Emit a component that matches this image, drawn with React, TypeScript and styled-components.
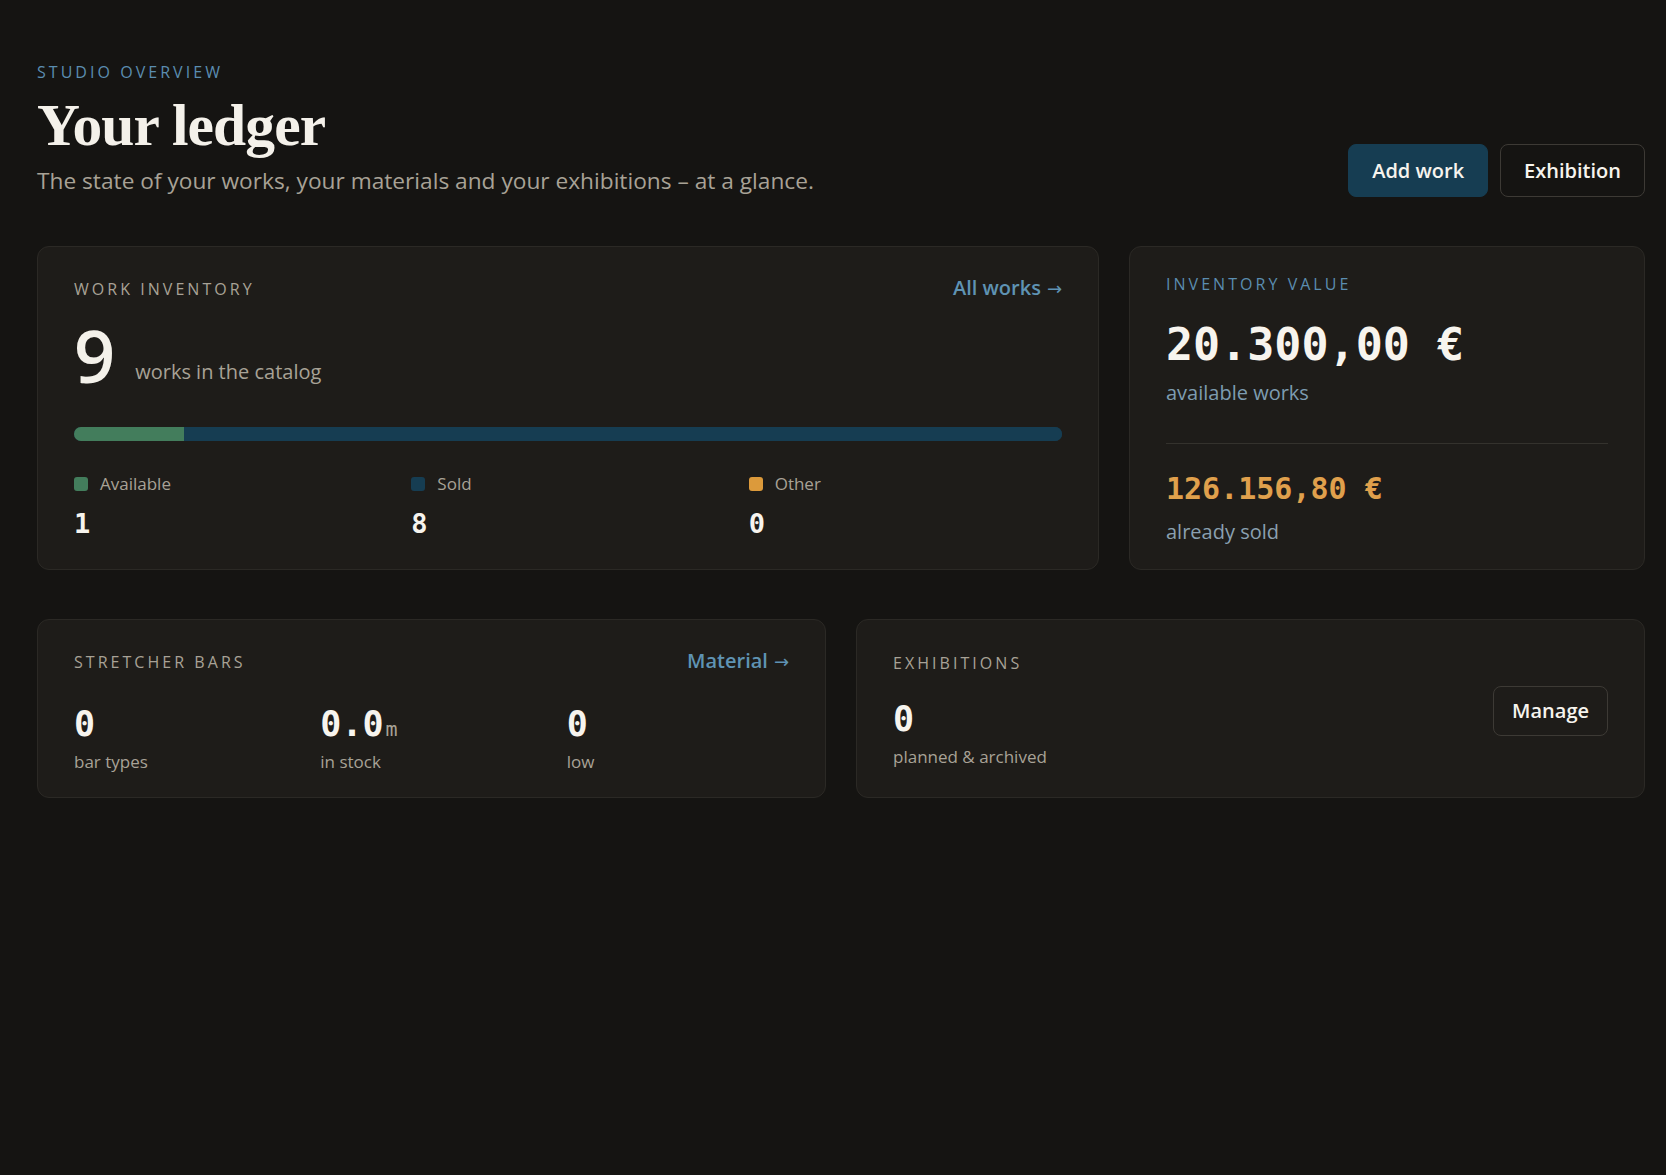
import React from "react";
import styled, { createGlobalStyle } from "styled-components";

const GlobalStyle = createGlobalStyle`
  html, body {
    margin: 0;
    padding: 0;
    background: #151412;
  }
  body {
    font-family: "Open Sans", "Noto Sans", sans-serif;
    color: #f4f1ea;
    -webkit-font-smoothing: antialiased;
  }
  * { box-sizing: border-box; }
`;

const Page = styled.main`
  min-height: 1175px;
  padding: 61px 21px 40px 37px;
  background: #151412;
`;

const Header = styled.header`
  display: flex;
  justify-content: space-between;
  align-items: flex-end;
`;

const HeaderText = styled.div`
  display: flex;
  flex-direction: column;
`;

const Eyebrow = styled.div<{ $tone?: "blue" | "muted" }>`
  font-size: 16px;
  line-height: 22px;
  letter-spacing: 0.19em;
  text-transform: uppercase;
  color: ${(p) => (p.$tone === "blue" ? "#5b8db0" : "#a8a296")};
`;

const Title = styled.h1`
  margin: 10px 0 0;
  font-family: "Liberation Serif", "Times New Roman", serif;
  font-weight: 700;
  font-size: 59.5px;
  line-height: 1.08;
  letter-spacing: -0.015em;
  color: #f4f1ea;
`;

const Subtitle = styled.p`
  margin: 8px 0 0;
  font-size: 22.7px;
  line-height: 32px;
  color: #a8a296;
`;

const Actions = styled.div`
  display: flex;
  gap: 12px;
`;

const Button = styled.button<{ $primary?: boolean; $h?: number; $px?: number }>`
  height: ${(p) => p.$h ?? 53}px;
  padding: 0 ${(p) => p.$px ?? 23}px;
  border-radius: 8px;
  font-family: "Open Sans", sans-serif;
  font-size: 20px;
  font-weight: 600;
  color: #f7f4ee;
  cursor: pointer;
  background: ${(p) => (p.$primary ? "#163d52" : "transparent")};
  border: 1px solid ${(p) => (p.$primary ? "#163d52" : "#3d3a35")};
`;

const Grid = styled.section<{ $cols: string; $mt: number }>`
  display: grid;
  grid-template-columns: ${(p) => p.$cols};
  gap: 30px;
  margin-top: ${(p) => p.$mt}px;
`;

const Card = styled.div`
  background: #1e1c19;
  border: 1px solid #2b2925;
  border-radius: 12px;
  padding: 26px 36px 22px;
  display: flex;
  flex-direction: column;
`;

const RowCard = styled(Card)`
  flex-direction: row;
  align-items: center;
  justify-content: space-between;
`;

const CardHead = styled.div`
  display: flex;
  justify-content: space-between;
  align-items: center;
`;

const HeadLink = styled.a`
  font-size: 20px;
  line-height: 30px;
  font-weight: 600;
  color: #5f93b3;
  text-decoration: none;
  cursor: pointer;
`;

const Arrow = styled.span`
  font-family: "DejaVu Sans", sans-serif;
  font-weight: 400;
  font-size: 18px;
  margin-left: 6px;
`;

const Hero = styled.div`
  display: flex;
  align-items: flex-end;
  gap: 20px;
  margin-top: 15px;
`;

const BigNum = styled.span`
  font-size: 72px;
  line-height: 72px;
  font-weight: 600;
  color: #f4f1ea;
`;

const HeroCaption = styled.div`
  font-size: 20px;
  line-height: 30px;
  color: #a8a296;
  padding-bottom: 4px;
`;

const Caption = styled.div<{ $size?: number; $color?: string; $mt?: number }>`
  font-size: ${(p) => p.$size ?? 20}px;
  line-height: 1.5;
  color: ${(p) => p.$color ?? "#a8a296"};
  margin-top: ${(p) => p.$mt ?? 0}px;
`;

const Bar = styled.div`
  display: flex;
  height: 14px;
  border-radius: 7px;
  overflow: hidden;
  margin-top: 36px;
  background: #163d52;
`;

const BarSeg = styled.div<{ $color: string }>`
  height: 100%;
  background: ${(p) => p.$color};
`;

const Columns = styled.div<{ $mt: number }>`
  display: grid;
  grid-template-columns: repeat(3, minmax(0, 1fr));
  gap: 24px;
  margin-top: ${(p) => p.$mt}px;
`;

const LegendItem = styled.div`
  display: flex;
  flex-direction: column;
`;

const LegendLabel = styled.div`
  display: flex;
  align-items: center;
  gap: 12px;
  font-size: 17px;
  line-height: 25.5px;
  color: #a8a296;
`;

const Swatch = styled.span<{ $color: string }>`
  width: 14px;
  height: 14px;
  border-radius: 3px;
  background: ${(p) => p.$color};
  flex: none;
`;

const Mono = styled.div<{ $size: number; $color?: string; $mt?: number }>`
  font-family: "DejaVu Sans Mono", "Liberation Mono", monospace;
  font-weight: 700;
  font-size: ${(p) => p.$size}px;
  line-height: 1.2;
  color: ${(p) => p.$color ?? "#f7f4ee"};
  margin-top: ${(p) => p.$mt ?? 0}px;
  white-space: nowrap;
`;

const Unit = styled.span`
  font-family: "DejaVu Sans Mono", monospace;
  font-weight: 400;
  font-size: 20px;
  color: #a8a296;
  margin-left: 2px;
`;

const Divider = styled.hr`
  border: none;
  height: 1px;
  background: #34322d;
  margin: 35px 0 0;
`;

const Stat = styled.div`
  display: flex;
  flex-direction: column;
`;

const legend = [
  { label: "Available", color: "#437d5c", value: "1" },
  { label: "Sold", color: "#163d52", value: "8" },
  { label: "Other", color: "#dc9a3b", value: "0" },
];

const stats = [
  { value: "0", label: "bar types" },
  { value: "0.0", unit: "m", label: "in stock" },
  { value: "0", label: "low" },
];

export default function App() {
  const total = 9;
  const available = 1;
  return (
    <>
      <GlobalStyle />
      <Page>
        <Header>
          <HeaderText>
            <Eyebrow $tone="blue">Studio overview</Eyebrow>
            <Title>Your ledger</Title>
            <Subtitle>
              The state of your works, your materials and your exhibitions – at a glance.
            </Subtitle>
          </HeaderText>
          <Actions>
            <Button $primary>Add work</Button>
            <Button>Exhibition</Button>
          </Actions>
        </Header>

        <Grid $cols="minmax(0, 1062fr) minmax(0, 516fr)" $mt={49}>
          <Card>
            <CardHead>
              <Eyebrow>Work inventory</Eyebrow>
              <HeadLink>
                All works<Arrow>→</Arrow>
              </HeadLink>
            </CardHead>
            <Hero>
              <BigNum>{total}</BigNum>
              <HeroCaption>works in the catalog</HeroCaption>
            </Hero>
            <Bar>
              <BarSeg $color="#437d5c" style={{ width: `${(available / total) * 100}%` }} />
              <BarSeg $color="#163d52" style={{ flex: 1 }} />
            </Bar>
            <Columns $mt={30}>
              {legend.map((l) => (
                <LegendItem key={l.label}>
                  <LegendLabel>
                    <Swatch $color={l.color} />
                    {l.label}
                  </LegendLabel>
                  <Mono $size={27} $mt={11}>
                    {l.value}
                  </Mono>
                </LegendItem>
              ))}
            </Columns>
          </Card>

          <Card>
            <Eyebrow $tone="blue">Inventory value</Eyebrow>
            <Mono $size={45} $mt={23}>
              20.300,00 €
            </Mono>
            <Caption $color="#7d9cb1" $mt={6}>
              available works
            </Caption>
            <Divider />
            <Mono $size={30} $color="#e0a04c" $mt={27}>
              126.156,80 €
            </Mono>
            <Caption $color="#8aa0b0" $mt={10}>
              already sold
            </Caption>
          </Card>
        </Grid>

        <Grid $cols="repeat(2, minmax(0, 1fr))" $mt={49}>
          <Card>
            <CardHead>
              <Eyebrow>Stretcher bars</Eyebrow>
              <HeadLink>
                Material<Arrow>→</Arrow>
              </HeadLink>
            </CardHead>
            <Columns $mt={26}>
              {stats.map((s) => (
                <Stat key={s.label}>
                  <Mono $size={35}>
                    {s.value}
                    {s.unit && <Unit>{s.unit}</Unit>}
                  </Mono>
                  <Caption $size={17} $mt={4}>
                    {s.label}
                  </Caption>
                </Stat>
              ))}
            </Columns>
          </Card>

          <RowCard>
            <Stat>
              <Eyebrow>Exhibitions</Eyebrow>
              <Mono $size={35} $mt={24}>
                0
              </Mono>
              <Caption $size={17} $mt={4}>
                planned &amp; archived
              </Caption>
            </Stat>
            <Button $h={50} $px={18}>
              Manage
            </Button>
          </RowCard>
        </Grid>
      </Page>
    </>
  );
}
